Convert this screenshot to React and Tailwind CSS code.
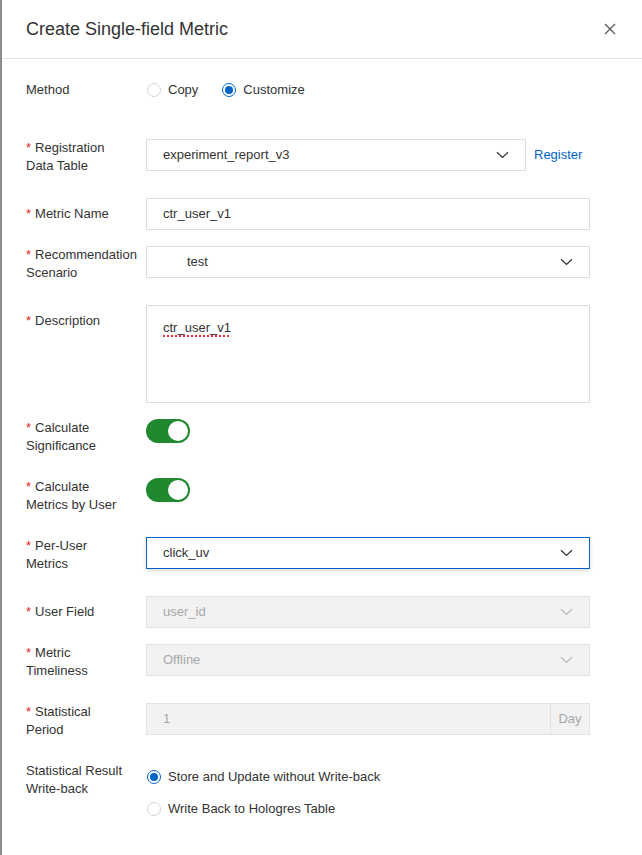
import React from "react";

function Chevron({ disabled }) {
  return (
    <svg width="13" height="8" viewBox="0 0 13 8" fill="none">
      <path d="M1 1.2 L6.5 6.5 L12 1.2" stroke={disabled ? "#b8b8b8" : "#333"} strokeWidth="1.2" />
    </svg>
  );
}

function Label({ lines, required = true }) {
  return (
    <div className="w-[120px] shrink-0 min-h-8 flex items-center text-[13px] leading-[18px] text-[#333]">
      <div>
        {lines.map((l, i) => (
          <div key={i} className="whitespace-nowrap">
            {i === 0 && required && <span className="text-[#e2231a] mr-[4px]">*</span>}
            {l}
          </div>
        ))}
      </div>
    </div>
  );
}

function Radio({ checked, label }) {
  return (
    <div className="flex items-center">
      <span
        className={
          "ml-px w-[14px] h-[14px] rounded-full border flex items-center justify-center bg-white " +
          (checked ? "border-[#0064c8]" : "border-[#d4d4d4]")
        }
      >
        {checked && <span className="w-[8px] h-[8px] rounded-full bg-[#0064c8]" />}
      </span>
      <span className="ml-[7px] text-[13px] text-[#333]">{label}</span>
    </div>
  );
}

function Select({ value, disabled, focused, w = "w-[444px]", textPl = "pl-4" }) {
  return (
    <div
      className={
        w +
        " h-8 border flex items-center justify-between pr-4 " +
        textPl +
        " " +
        (disabled
          ? "bg-[#f2f2f2] border-[#e3e3e3] text-[#a8a8a8]"
          : focused
          ? "bg-white border-[#0064c8] text-[#333] shadow-[0_2px_4px_rgba(0,0,0,0.15)]"
          : "bg-white border-[#dcdcdc] text-[#333]")
      }
    >
      <span className="text-[13px]">{value}</span>
      <Chevron disabled={disabled} />
    </div>
  );
}

function Toggle() {
  return (
    <div className="w-[44px] h-[24px] rounded-full bg-[#20882f] flex items-center justify-end pr-[2px]">
      <div className="w-[20px] h-[20px] rounded-full bg-white" />
    </div>
  );
}

export default function App() {
  return (
    <div className="w-[642px] h-[855px] bg-white flex overflow-hidden font-['Liberation_Sans',Arial,sans-serif]">
      <div className="w-[2px] shrink-0 bg-[#8c8c8c]" />
      <div className="flex-1 flex flex-col">
        <div className="h-[59px] border-b border-[#e3e3e3] flex items-center justify-between pl-6 pr-[26px]">
          <span className="text-[18px] text-[#333]">Create Single-field Metric</span>
          <svg width="12" height="12" viewBox="0 0 12 12" fill="none">
            <path d="M1 1 L11 11 M11 1 L1 11" stroke="#555" strokeWidth="1.2" />
          </svg>
        </div>
        <div className="pl-6 flex flex-col">
          {/* Method */}
          <div className="mt-[15px] h-8 flex items-center">
            <Label lines={["Method"]} required={false} />
            <div className="flex items-center gap-[23px]">
              <Radio label="Copy" />
              <Radio checked label="Customize" />
            </div>
          </div>
          {/* Registration */}
          <div className="mt-[33px] flex items-start">
            <Label lines={["Registration", "Data Table"]} />
            <Select value="experiment_report_v3" w="w-[380px]" />
            <span className="ml-2 h-8 flex items-center text-[13px] text-[#0064c8]">Register</span>
          </div>
          {/* Metric name */}
          <div className="mt-[23px] flex items-start">
            <Label lines={["Metric Name"]} />
            <div className="w-[444px] h-8 border border-[#dcdcdc] flex items-center pl-4 text-[13px] text-[#333]">
              ctr_user_v1
            </div>
          </div>
          {/* Scenario */}
          <div className="mt-4 flex items-start">
            <Label lines={["Recommendation", "Scenario"]} />
            <Select value="test" textPl="pl-[40px]" />
          </div>
          {/* Description */}
          <div className="mt-[23px] flex items-start">
            <Label lines={["Description"]} />
            <div className="w-[444px] h-[98px] border border-[#dcdcdc] pl-4 pt-[12px] text-[13px] text-[#333]">
              <span className="underline decoration-dotted decoration-red-500 decoration-[1.5px] underline-offset-[3px]">ctr_user_v1</span>
            </div>
          </div>
          {/* Calc sig */}
          <div className="mt-4 flex items-start">
            <Label lines={["Calculate", "Significance"]} />
            <Toggle />
          </div>
          <div className="mt-[23px] flex items-start">
            <Label lines={["Calculate", "Metrics by User"]} />
            <Toggle />
          </div>
          {/* Per-user */}
          <div className="mt-[23px] flex items-start">
            <Label lines={["Per-User", "Metrics"]} />
            <Select value="click_uv" focused />
          </div>
          <div className="mt-[23px] flex items-start">
            <Label lines={["User Field"]} />
            <Select value="user_id" disabled />
          </div>
          <div className="mt-4 flex items-start">
            <Label lines={["Metric", "Timeliness"]} />
            <Select value="Offline" disabled />
          </div>
          <div className="mt-[23px] flex items-start">
            <Label lines={["Statistical", "Period"]} />
            <div className="w-[444px] h-8 border border-[#e3e3e3] bg-[#f2f2f2] flex items-stretch text-[13px] text-[#a8a8a8]">
              <div className="flex-1 flex items-center pl-4">1</div>
              <div className="w-[39px] border-l border-[#e3e3e3] flex items-center justify-center">Day</div>
            </div>
          </div>
          <div className="mt-[22px] flex items-start">
            <div className="pt-px">
              <Label lines={["Statistical Result", "Write-back"]} required={false} />
            </div>
            <div className="flex flex-col">
              <div className="h-8 flex items-center"><Radio checked label="Store and Update without Write-back" /></div>
              <div className="h-8 flex items-center"><Radio label="Write Back to Hologres Table" /></div>
            </div>
          </div>
        </div>
      </div>
    </div>
  );
}
